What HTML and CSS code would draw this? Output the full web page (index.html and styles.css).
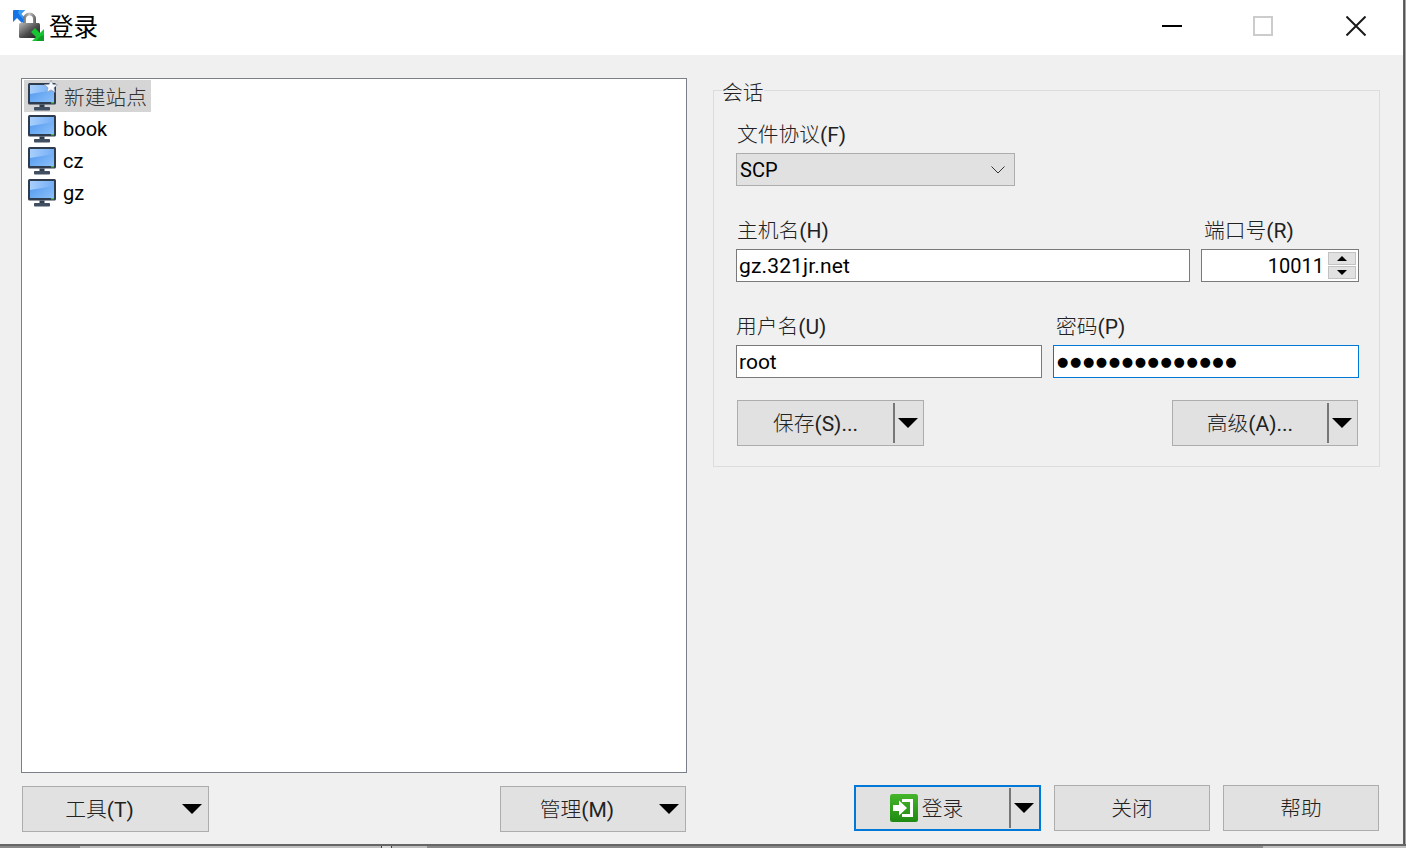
FILE: index.html
```html
<!DOCTYPE html>
<html lang="zh-CN">
<head>
<meta charset="utf-8">
<title>登录</title>
<link rel="stylesheet" href="styles.css">
</head>
<body>
<svg class="defs" width="0" height="0" aria-hidden="true">
  <defs>
    <linearGradient id="scr" x1="0" y1="0" x2="1" y2="1">
      <stop offset="0" stop-color="#4a94ee"/>
      <stop offset="1" stop-color="#8cc0f9"/>
    </linearGradient>
    <linearGradient id="gloss" x1="0" y1="0" x2="1" y2="0">
      <stop offset="0" stop-color="#a8cffc"/>
      <stop offset="1" stop-color="#74aef6"/>
    </linearGradient>
    <linearGradient id="lockb" x1="0" y1="0" x2="1" y2="1">
      <stop offset="0" stop-color="#b8b8b8"/>
      <stop offset="0.55" stop-color="#4a4a4a"/>
      <stop offset="1" stop-color="#1c1c1c"/>
    </linearGradient>
    <linearGradient id="shackle" x1="0" y1="0" x2="1" y2="0">
      <stop offset="0" stop-color="#6d6d6d"/>
      <stop offset="0.5" stop-color="#c4c4c4"/>
      <stop offset="1" stop-color="#5a5a5a"/>
    </linearGradient>
    <linearGradient id="gbtn" x1="0" y1="0" x2="0" y2="1">
      <stop offset="0" stop-color="#45b52a"/>
      <stop offset="1" stop-color="#1f8a12"/>
    </linearGradient>
    <symbol id="monitor" viewBox="0 0 28 28">
      <rect x="0" y="0" width="28" height="21.5" rx="1.5" fill="#2f3c4e"/>
      <rect x="2" y="2" width="24" height="17" fill="url(#scr)"/>
      <path d="M2 2h24v5L2 11z" fill="url(#gloss)"/>
      <rect x="23" y="19" width="3" height="1.400" fill="#3fc04a"/>
      <rect x="11.500" y="21.500" width="5" height="2.500" fill="#2f3c4e"/>
      <rect x="6" y="24" width="16" height="3.500" rx=".8" fill="#414f62"/>
    </symbol>
  </defs>
</svg>
<div class="screen">
  <div class="window">
    <header class="titlebar">
      <svg class="app-icon" viewBox="0 0 32 32" width="32" height="32">
        <path d="M0 12V1q0-1 1-1h11L8 4l5 5-4 4-5-5z" fill="#1473e6"/>
        <path d="M6 0h6L8 4l4 4-2 1-5-6z" fill="#3d9cf0"/>
        <path d="M10 15V9a6.500 6.500 0 0 1 13 0v6h-3V9a3.500 3.500 0 0 0-7 0v6z" fill="url(#shackle)"/>
        <rect x="6" y="13" width="21" height="15" rx="1.500" fill="url(#lockb)"/>
        <path d="M31 19v12H19l4-4-5-5 4-4 5 5z" fill="#17c431"/>
        <path d="M31 25v6h-8l4-4 1-1z" fill="#0f9e25"/>
      </svg>
      <span class="title">登录</span>
      <div class="controls">
        <span class="ctl-min"></span>
        <span class="ctl-max"></span>
        <svg class="ctl-close" viewBox="0 0 20 20" width="20" height="20"><path d="M.5.5l19 19M19.500.5l-19 19" stroke="#1a1a1a" stroke-width="2" fill="none"/></svg>
      </div>
    </header>
    <main class="body">
      <div class="left">
        <ul class="tree">
          <li class="node selected">
            <span class="ico"><svg width="28" height="28"><use href="#monitor"/></svg>
              <svg class="star" viewBox="0 0 14 14" width="14" height="14"><path d="M7 0l1.900 4.300 4.600.4-3.500 3 1.100 4.600L7 9.900l-4.100 2.400L4 7.700.5 4.700l4.600-.4z" fill="#f7f8fb" stroke="#8f9bae" stroke-width=".7"/></svg>
            </span>
            <span class="cn node-cn">新建站点</span>
          </li>
          <li class="node"><span class="ico"><svg width="28" height="28"><use href="#monitor"/></svg></span><span class="node-text">book</span></li>
          <li class="node"><span class="ico"><svg width="28" height="28"><use href="#monitor"/></svg></span><span class="node-text">cz</span></li>
          <li class="node"><span class="ico"><svg width="28" height="28"><use href="#monitor"/></svg></span><span class="node-text">gz</span></li>
        </ul>
        <div class="left-actions">
          <button class="btn menu-btn"><span class="menu-label"><span class="cn">工具</span>(T)</span><i class="caret"></i></button>
          <button class="btn menu-btn"><span class="menu-label"><span class="cn">管理</span>(M)</span><i class="caret"></i></button>
        </div>
      </div>
      <div class="right">
        <section class="group">
          <span class="legend cn">会话</span>
          <div class="field proto">
            <label class="lbl"><span class="cn">文件协议</span>(F)</label>
            <div class="combo"><span>SCP</span>
              <svg viewBox="0 0 14 8" width="14" height="8"><path d="M.5.5 7 7 13.500.5" stroke="#333" fill="none"/></svg>
            </div>
          </div>
          <div class="row row-host">
            <div class="field grow"><label class="lbl"><span class="cn">主机名</span>(H)</label><div class="input host">gz.321jr.net</div></div>
            <div class="field port"><label class="lbl"><span class="cn">端口号</span>(R)</label>
              <div class="input spin"><span>10011</span>
                <span class="spinner">
                  <span class="sp"><i class="tri-up"></i></span>
                  <span class="sp"><i class="tri-down"></i></span>
                </span>
              </div>
            </div>
          </div>
          <div class="row row-cred">
            <div class="field half"><label class="lbl lbl-user"><span class="cn">用户名</span>(U)</label><div class="input">root</div></div>
            <div class="field half"><label class="lbl lbl-pass"><span class="cn">密码</span>(P)</label><div class="input focus dots">●●●●●●●●●●●●●●</div></div>
          </div>
          <div class="row row-btns">
            <button class="btn split"><span class="split-label"><span class="cn">保存</span>(S)...</span><span class="split-sep"></span><i class="caret"></i></button>
            <button class="btn split"><span class="split-label"><span class="cn">高级</span>(A)...</span><span class="split-sep"></span><i class="caret"></i></button>
          </div>
        </section>
        <div class="right-actions">
          <button class="btn split primary">
            <span class="split-label login-label">
              <svg viewBox="0 0 28 28" width="28" height="28"><rect width="28" height="28" rx="2.500" fill="url(#gbtn)"/><path d="M12 5h11v18H12v-3h8V8h-8z" fill="#fff"/><path d="M3 11h6V6.500l8 7.500-8 7.500V17H3z" fill="#fff"/></svg>
              <span class="cn">登录</span></span><span class="split-sep"></span><i class="caret"></i></button>
          <button class="btn plain"><span class="cn">关闭</span></button>
          <button class="btn plain"><span class="cn">帮助</span></button>
        </div>
      </div>
    </main>
  </div>
  <div class="edge-right"></div>
</div>
<div class="edge-bottom">
  <span class="seg s1"></span><span class="seg s2"></span><span class="seg s3"></span><span class="seg s4"></span><span class="seg s5"></span><span class="seg s6"></span>
</div>
</body>
</html>
```

FILE: styles.css
```css
* { box-sizing: border-box; }
html, body { margin: 0; padding: 0; }
body {
  width: 1406px;
  height: 848px;
  overflow: hidden;
  background: #fff;
  color: #000;
  font-family: Roboto, "Noto Sans CJK SC", sans-serif;
  font-size: 21px;
  line-height: 28px;
}
.cn { font-family: "Noto Sans CJK SC", sans-serif; font-weight: 300; color: #222; font-size: 20.750px; }
.defs { position: absolute; }
.screen { display: flex; height: 844px; }
.window { width: 1403px; display: flex; flex-direction: column; }
.edge-right { width: 3px; background: linear-gradient(90deg, #6b6b6b, #555 50%, #cfcfcf); }
.edge-bottom { display: flex; height: 4px; background: #666; padding-top: 2px; }
.seg { height: 2px; }
.s1 { width: 80px; background: #8a8a8a; }
.s2 { width: 301px; background: #c0c0c0; }
.s3 { width: 11px; background: #d8d8d8; border-left: 1px solid #444; border-right: 1px solid #444; }
.s4 { width: 35px; background: #c0c0c0; }
.s5 { width: 836px; background: #8a8a8a; }
.s6 { flex: 1; background: #c0c0c0; }

.titlebar { height: 55px; flex: none; background: #fff; display: flex; align-items: flex-start; padding: 10px 0 0 13px; }
.app-icon { flex: none; }
.title { margin: 2px 0 0 4px; font-family: "Noto Sans CJK SC", sans-serif; font-size: 24.500px; line-height: 28px; }
.controls { margin-left: auto; display: flex; padding: 6px 37px 0 0; align-items: flex-start; }
.ctl-min { width: 20px; height: 2px; margin-top: 9px; background: #000; }
.ctl-max { width: 20px; height: 20px; margin-left: 71px; border: 2px solid #ccc; }
.ctl-close { margin-left: 73px; }

.body { flex: 1; background: #f0f0f0; display: flex; padding: 23px 0 0 21px; }
.left { width: 666px; display: flex; flex-direction: column; }
.tree { list-style: none; margin: 0; padding: 1px 2px; height: 695px; background: #fff; border: 1px solid #7a7f8a; }
.node { height: 32px; width: 127px; display: flex; align-items: center; padding-left: 4px; gap: 7px; font-size: 20px; }
.node.selected { background: #d5d5d5; }
.node-cn { margin-left: 1px; margin-bottom: 1px; color: #333; }
.node-text { margin-top: 2px; }
.ico { position: relative; width: 28px; height: 28px; flex: none; margin-top: 1px; }
.ico svg { display: block; }
.ico .star { position: absolute; left: 16px; top: -3px; }
.left-actions { display: flex; justify-content: space-between; margin-top: 13px; padding: 0 1px; }

.btn {
  display: flex; align-items: center; height: 46px; padding: 0;
  background: #e1e1e1; border: 1px solid #adadad; color: #222;
  font: inherit; line-height: 28px;
}
.menu-btn { width: 187px; }
.left-actions .menu-btn:last-child { width: 186px; }
.menu-label { flex: 1; text-align: center; padding-right: 6px; }
.menu-btn .caret { margin-right: 6px; }
.caret { width: 0; height: 0; border-left: 10px solid transparent; border-right: 10px solid transparent; border-top: 10px solid #000; flex: none; }

.right { margin-left: 26px; width: 667px; display: flex; flex-direction: column; }
.group { position: relative; height: 377px; margin-top: 12px; border: 1px solid #dcdcdc; padding: 29px 20px 0 22px; }
.legend { position: absolute; left: 8px; top: -12px; background: #f0f0f0; line-height: 24px; }
.field { display: flex; flex-direction: column; }
.lbl { height: 28px; color: #222; padding-left: 1px; line-height: 26px; margin-bottom: 5px; }
.lbl-user { padding-left: 0; }
.lbl-pass { padding-left: 3px; }
.proto { width: 279px; }
.combo { height: 33px; background: #e1e1e1; border: 1px solid #adadad; display: flex; align-items: center; justify-content: space-between; padding: 0 9px 0 3px; font-size: 20px; }
.row { display: flex; }
.row-host { margin-top: 30px; gap: 11px; }
.grow { width: 454px; }
.port { width: 158px; }
.port .lbl { padding-left: 3px; }
.input { height: 33px; background: #fff; border: 1px solid #7a7a7a; padding-left: 2px; line-height: 33px; }
.host { letter-spacing: .15px; }
.spin { display: flex; justify-content: flex-end; padding: 0 2px 0 0; font-size: 20px; }
.spinner { width: 28px; margin-left: 4px; display: flex; flex-direction: column; gap: 1px; padding-top: 2px; }
.sp { height: 13px; background: #e1e1e1; border: 1px solid #c2c2c2; display: flex; align-items: center; justify-content: center; }
.tri-up { border-left: 5px solid transparent; border-right: 5px solid transparent; border-bottom: 5px solid #000; }
.tri-down { border-left: 5px solid transparent; border-right: 5px solid transparent; border-top: 5px solid #000; }
.row-cred { margin-top: 30px; gap: 11px; }
.half { width: 306px; }
.focus { border-color: #0078d7; }
.dots { font-family: "DejaVu Sans", sans-serif; font-size: 13px; letter-spacing: 1.600px; padding-left: 3px; line-height: 31px; }
.row-btns { margin-top: 22px; padding: 0 1px; justify-content: space-between; }
.split { width: 187px; }
.row-btns .split:last-child { width: 186px; }
.split-label { flex: 1; text-align: center; }
.split-sep { width: 2px; height: 40px; background: #777; flex: none; }
.split .caret { margin: 0 5px 0 3px; }

.right-actions { display: flex; margin-top: 318px; margin-left: 141px; gap: 13px; }
.right-actions .cn { margin-bottom: 2px; }
.primary { width: 187px; border: 2px solid #0078d7; }
.login-label { display: flex; align-items: center; justify-content: center; gap: 4px; padding-right: 12px; }
.plain { width: 156px; justify-content: center; }
```
